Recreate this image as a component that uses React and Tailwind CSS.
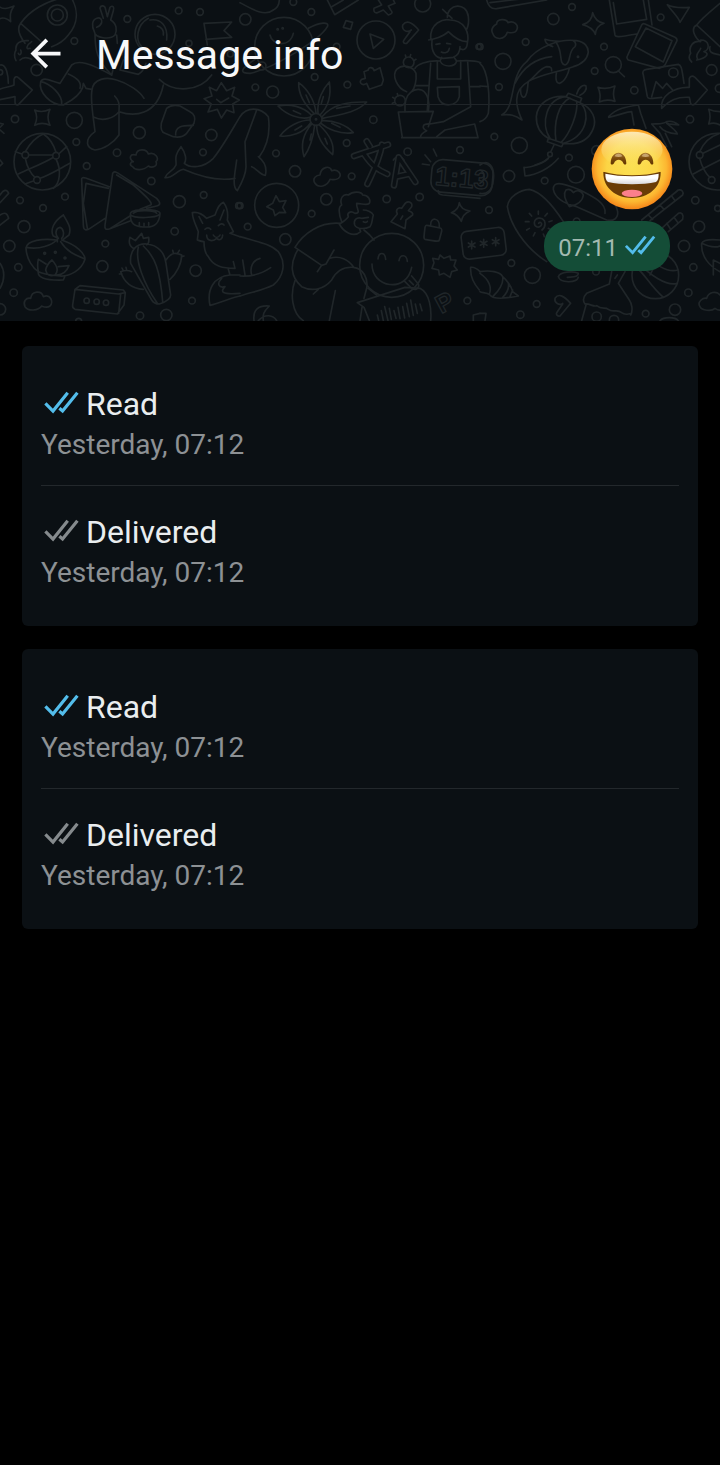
import { MdArrowBack } from 'react-icons/md';

const receipts = [
  [
    { status: 'read', label: 'Read', time: 'Yesterday, 07:12' },
    { status: 'delivered', label: 'Delivered', time: 'Yesterday, 07:12' },
  ],
  [
    { status: 'read', label: 'Read', time: 'Yesterday, 07:12' },
    { status: 'delivered', label: 'Delivered', time: 'Yesterday, 07:12' },
  ],
];

// Wallpaper doodles, drawn at three times their size in six tiles of 720x480.
const tiles = [
  {
    x: 0,
    y: 0,
    circles: [[172, 45, 30], [172, 45, 18], [382, 57, 10], [536, 32, 10], [600, 36, 10], [223, 123, 10], [110, 210, 17], [0, 217, 8], [45, 357, 11], [223, 361, 24], [229, 426, 10], [418, 398, 18], [351, 458, 11], [634, 405, 17], [609, 457, 10], [567, 130, 9], [691, 162, 9], [465, 103, 60], [127, 485, 85], [76, 465, 10], [168, 467, 10], [111, 540, 10]],
    paths: [
      // globe
      'M46 455L66 462M86 465H158M76 455C90 430 110 410 130 402M168 457C160 430 150 415 130 402M176 462L200 440M76 475C80 500 95 525 105 532M168 477C185 510 180 550 160 565M120 535C150 525 190 500 210 490M55 522C90 505 130 490 158 473M100 543L75 552',
      // rocket
      'M62 70C90 30 140 5 180 -5M215 -5C235 30 235 70 205 105C190 125 170 135 155 140M62 70L135 135M62 70C50 85 60 110 75 130M85 122C60 120 45 130 48 150C42 160 42 170 48 182M95 125C80 135 75 150 90 145M60 180C70 170 80 170 95 178M62 150C66 160 60 170 55 160',
      'M-5 18C10 30 22 26 42 18C30 35 30 45 32 65C20 55 10 50 -5 58',
      // astronaut
      'M283 95C275 80 275 60 290 55C300 50 308 60 305 68C302 76 296 80 290 82M310 55L300 25C302 14 314 16 316 25L322 50L330 22C338 14 344 22 340 32L332 60C350 70 352 90 345 105M283 95C285 115 330 120 345 105M285 100C285 150 290 180 335 225L340 205M350 105L352 130',
      'M445 55C410 75 405 120 425 140M450 60C480 55 505 75 500 120M472 78C485 82 492 92 490 105M365 165L375 140M370 180L360 210L415 223C430 215 435 200 438 190',
      'M180 250L215 195C235 178 270 190 335 225M122 245C130 230 145 240 180 250M122 245C115 275 150 315 190 315L215 300C245 280 250 265 250 250L258 265L275 268M205 222C235 235 245 250 240 265M122 245C150 250 190 285 185 315',
      'M276 270C280 235 320 230 350 240C385 250 420 275 432 295M276 270C270 300 280 350 285 395C250 420 260 445 285 450C310 448 340 430 357 405V335C360 310 355 300 344 288M282 352C310 365 340 355 357 335C400 350 470 350 490 255M478 238C520 280 600 275 635 225',
      'M622 135L612 70L695 66L672 92L695 112L618 118',
      'M-5 270C10 260 30 262 42 255V238C44 230 50 228 55 233L97 270L55 314C48 316 45 312 45 306V290L-5 300M0 195C20 190 25 230 25 250',
      'M104 330Q126 340 150 328Q138 350 150 376Q126 364 104 376Q116 352 104 330Z',
      'M612 296L636 288L628 262L650 272L664 248L680 272L704 262L696 288L718 300L698 312L702 338L680 330L664 354L652 328L624 336L634 312ZM650 298L662 308L686 294',
      'M500 325Q515 312 540 318L570 335Q590 345 582 370L560 400Q545 415 520 410L495 400Q480 395 484 370ZM527 405C525 380 545 375 580 376',
      // whale
      'M543 440C520 470 530 480 528 495C520 515 500 515 495 533C520 535 530 510 550 508C600 530 650 545 705 535M543 440C558 460 560 480 553 490C570 505 610 505 640 475C665 445 690 400 720 350C740 320 780 320 805 350C812 400 800 440 778 470M770 330L735 425L738 500M775 470C800 490 800 510 796 526C780 525 770 505 755 500M710 480C705 520 695 560 712 572C730 540 738 520 738 500',
      'M400 485C385 475 390 460 408 465C410 445 440 445 445 462C465 455 480 475 468 485C475 500 455 505 445 498C430 512 405 512 398 500C386 495 392 485 400 485Z',
      'M0 370L10 372L0 382M0 390L12 400',
    ],
  },
  {
    x: 720,
    y: 0,
    circles: [[160, 6, 10], [16, 58, 17], [214, 36, 10], [548, 12, 24], [408, 120, 57], [224, 231, 10], [322, 254, 10], [46, 262, 10], [98, 276, 18], [228, 358, 18], [228, 358, 2], [400, 359, 11], [320, 429, 10], [108, 460, 10], [503, 455, 11], [660, 450, 10], [716, 140, 8], [132, 140, 88], [113, 88, 2], [128, 85, 2], [66, 198, 12], [290, 140, 10], [506, 187, 16], [480, 302, 16]],
    paths: [
      'M90 105C95 135 150 145 160 100M205 85C240 65 270 65 262 80C240 120 100 205 30 220C0 220 -5 210 50 175',
      'M390 102L431 118L400 145Z',
      'M0 8C40 30 75 50 100 30C120 20 118 0 118 -5M262 0L284 44L355 0M275 20L310 0',
      'M318 62L338 67L332 88L310 82Z',
      'M412 -5L425 15L402 25C400 35 405 40 412 38L430 30L445 45C455 42 460 38 452 30L445 18L465 10L460 0',
      'M488 75C500 60 515 65 536 90L500 130C490 132 488 125 492 120L510 95M488 75C485 90 500 100 514 90',
      'M372 215L385 210C385 200 400 200 402 212L420 203L430 240L425 255L388 268L380 250C365 260 355 245 365 238L376 235Z',
      // gardener
      'M608 28L636 55M622 52C622 10 680 5 685 50C687 65 684 80 680 88M572 118C568 70 610 55 630 60C670 60 690 95 682 130C680 150 668 152 660 145M566 120C580 118 610 110 625 95C640 110 660 125 680 125M576 120C572 160 590 175 610 175L640 172C655 165 660 150 660 140M588 133L600 131M620 130L632 132M604 156C612 160 625 160 628 145',
      'M605 172L600 183C610 203 645 203 650 183L642 172M600 183C560 180 530 195 525 205M650 183C690 180 715 185 722 188M592 185V237H662V182M592 262L658 260V290C650 320 605 325 594 290ZM572 190L562 330M683 186L692 320L610 365L570 372C545 370 545 385 560 392C545 400 540 405 542 412M528 257H565M690 260H720M485 413H714L704 372L615 390L590 410M475 336L580 334L565 380M475 336L487 413',
      'M495 335C490 270 530 265 545 270C565 280 570 310 565 334M500 275C470 265 455 225 470 208C490 190 520 200 528 220C530 240 525 265 515 275M498 172L496 165M510 171L512 164M521 182L528 178M465 296L458 292M464 307L457 310M474 288L472 281',
      // flower
      'M222 340C190 310 175 280 176 248C200 265 225 300 228 340M234 340C230 300 250 265 268 246C275 290 265 320 240 345M246 350C280 310 330 305 380 306C350 340 290 345 248 355M246 362C280 360 320 375 340 398C300 405 260 385 243 370M238 375C265 400 285 430 278 464C250 440 230 410 230 376M224 376C220 410 210 445 192 470C180 430 195 395 215 372M212 368C190 400 150 412 120 408C140 380 180 360 210 360M210 352C180 360 140 345 114 318C150 310 190 320 214 345M198 285L208 308M250 290L244 310M290 325L330 318M275 370L300 382M255 415L262 432M210 420L214 402M165 390L185 378M160 332L182 342',
      'M547 492L568 495M555 465L572 485M580 447L590 468M460 480C470 465 485 470 492 480',
    ],
  },
  {
    x: 1440,
    y: 0,
    circles: [[276, 21, 10], [220, 57, 17], [137, 126, 10], [69, 184, 24], [57, 261, 10], [0, 140, 9], [542, 52, 10], [372, 140, 10], [400, 194, 24], [344, 213, 10], [463, 271, 11], [695, 210, 16], [580, 218, 14], [630, 358, 11], [43, 410, 10], [118, 436, 24], [267, 473, 10], [210, 463, 7], [718, 265, 12], [294, 170, 2], [712, 485, 85], [659, 465, 10], [695, 540, 10], [350, 452, 15]],
    paths: [
      'M415 213L433 230M20 0C25 20 35 28 50 26L200 0M30 8L130 -4',
      'M38 100C30 85 45 75 50 72C50 55 80 55 84 68C100 60 118 75 110 90C105 102 90 98 82 97C75 120 45 122 38 100Z',
      'M338 38Q346 65 372 70Q348 78 346 103Q338 82 308 74Q336 66 338 38Z',
      'M354 262Q380 270 405 258Q396 282 405 304Q380 296 358 306Q364 284 354 262Z',
      // photos
      'M388 0L405 105C407 112 412 112 470 102M505 0L516 75M400 8L410 72L500 58L490 0M495 72L585 112C592 116 592 120 590 124L555 195C550 202 545 200 538 205L445 180C440 176 440 172 442 168L485 75C488 70 490 70 495 72ZM498 84L576 122L550 186L466 140Z',
      'M490 225C486 215 490 210 500 208L595 193C603 195 605 200 612 250M490 225L502 290C504 298 510 296 545 292M515 290L528 245L548 265L560 250L578 270M545 325C540 290 580 260 628 262V235C632 225 640 228 645 232L682 270L645 312C635 318 630 312 630 300L628 292C590 290 570 300 545 325Z',
      'M562 14C580 24 600 24 628 22L600 67C595 50 580 40 562 14Z',
      'M720 10C690 35 665 55 650 75L720 140M650 75C630 85 645 115 662 125C640 120 625 140 632 160C625 170 628 180 635 186M662 120C690 120 690 150 672 155C690 160 680 175 650 180M690 140C685 160 700 160 720 165M652 175C645 160 660 155 662 145',
      // koi
      'M65 345C110 320 85 230 140 185C170 140 240 115 290 122C340 130 335 185 280 200C210 225 110 230 110 300C110 330 120 345 126 360C105 345 90 342 65 345ZM195 118C215 125 225 122 240 124M195 118C195 135 210 135 218 140M230 130C250 160 235 190 255 195C275 190 262 155 285 140C290 130 285 125 280 122M105 250C130 200 170 175 215 170M230 215C225 240 230 250 238 250C255 245 265 220 268 205M122 265C120 290 130 295 135 290C145 275 142 255 145 245C170 225 180 205 200 200C215 200 215 205 215 212',
      // lantern
      'M169 350C172 310 210 285 258 290L300 308C340 325 350 360 340 385C325 425 290 435 250 430L205 415C180 400 168 380 169 350ZM258 290C200 295 180 370 210 415M300 308C335 340 320 410 250 430M270 294C235 310 220 370 228 422M290 303C295 340 270 400 243 428M258 290L300 308L305 295L265 280ZM290 282C295 262 310 252 318 258C322 268 312 280 300 286M205 415L250 430L245 440L202 425ZM222 435L212 456M208 470C200 485 180 490 165 495',
      'M386 350C410 325 440 320 475 315L482 340L498 385M386 352C420 345 440 335 455 335L462 375M515 372C530 370 545 375 560 365C580 360 590 370 596 375C580 372 570 375 560 370C580 385 590 395 592 402C570 400 550 395 540 380M515 372L540 400L560 440M556 400L575 440',
      'M720 335Q700 335 686 328Q694 350 686 372Q705 366 720 375M0 190C25 210 30 290 25 340C20 355 10 362 0 365M0 258L25 260',
      'M669 460L720 435M659 455C670 430 690 410 715 402M659 475C665 500 680 525 690 532M640 522C670 505 700 490 720 480',
    ],
  },
  {
    x: 0,
    y: 480,
    circles: [[260, 18, 10], [454, 63, 11], [60, 121, 10], [195, 110, 10], [129, 144, 10], [72, 200, 18], [28, 258, 17], [316, 251, 10], [524, 214, 11], [538, 125, 18], [611, 105, 10], [307, 319, 17], [587, 332, 17], [55, 322, 11], [41, 398, 11], [420, 467, 11], [499, 465, 17], [576, 422, 10], [0, 448, 17], [716, 137, 9], [260, 422, 8], [290, 425, 8], [318, 428, 8], [134, 280, 3], [166, 277, 3], [195, 294, 3], [236, 484, 9]],
    paths: [
      // samosas and bowl
      'M328 80L257 54C250 52 243 52 245 60L250 195C250 212 260 212 270 205L315 175M325 85L258 70L250 130L262 205M440 145L470 138C482 135 482 128 470 115L355 40C348 36 342 32 338 40L315 195C313 208 318 210 330 206L392 182M390 168L330 206M350 45L400 75C440 110 460 130 452 135L420 148',
      'M391 162C391 145 480 145 480 160C480 175 391 178 391 162L392 175C395 195 410 201 440 201C465 201 478 190 480 160M400 160C410 148 465 150 470 160M418 188V196M432 190V198M446 188V196',
      // oil lamp
      'M190 165C160 185 150 210 160 228L175 235M190 165C205 190 215 205 207 225L190 238M175 235C165 225 165 205 180 202C190 205 195 225 185 235M172 235V245M78 265C80 240 130 235 170 240M182 245C200 275 225 285 253 296M78 265C80 300 100 325 115 335M185 240C230 255 255 280 255 298C245 330 210 350 180 348C150 345 130 342 115 335C112 350 130 362 190 360L195 348M78 262C120 270 155 255 170 240M115 335C112 320 112 310 115 298L138 312M137 330C140 315 150 305 156 300C165 310 180 330 165 345C150 350 140 345 137 330ZM175 320L207 317C200 335 190 345 170 345',
      // cactus
      'M392 310C388 270 410 250 440 252C475 255 495 280 498 310L512 405C512 415 500 425 478 432C465 432 458 425 455 420ZM415 262C405 300 430 370 472 430M430 258C465 290 480 330 488 425M400 265C388 258 386 245 390 232L406 242L425 220L430 235L446 232C448 245 445 252 440 254M498 300C515 275 530 278 545 285C545 310 530 340 510 358M430 388C390 385 370 360 362 335C375 330 385 330 395 335M520 278L518 271M534 278L538 271M545 290L552 288M366 342L358 342M370 332L366 324M380 330L378 322',
      'M225 388L240 377L370 390L376 398L372 435L352 462L225 448C218 445 217 440 218 435ZM225 388L355 402L376 398M362 402L356 460',
      'M75 440C68 425 78 412 92 415C95 392 125 390 130 410C150 400 162 425 150 438C140 445 130 440 125 438C115 452 85 455 75 440Z',
      'M0 105C10 90 20 85 26 100L0 128M0 165C15 155 22 160 26 175L0 195M0 310C15 330 15 360 0 385M0 0L8 10L0 18',
      // fox
      'M577 158C590 155 605 160 620 175L645 165C650 150 660 130 670 127C680 140 685 160 682 180L700 215L690 220L720 230M577 158C578 180 590 200 595 215L592 240C600 243 605 245 612 245M597 170L608 190M660 180L672 150M612 245C612 270 620 285 625 290C640 320 670 325 705 325M615 208C620 202 628 202 632 208M655 197C660 190 668 190 672 195M640 225C645 235 655 235 660 225M620 225C620 245 640 245 650 235C660 245 668 235 668 225M630 436C620 390 640 350 690 345H720M630 436C660 430 700 410 720 408M665 355C650 370 655 385 675 380C660 395 665 405 720 400M685 328L690 345M700 305L705 325',
    ],
  },
  {
    x: 720,
    y: 480,
    circles: [[165, 34, 17], [335, 49, 10], [110, 136, 66], [259, 118, 17], [440, 117, 11], [539, 111, 11], [215, 161, 10], [0, 137, 9], [23, 200, 10], [136, 238, 17], [455, 316, 96], [682, 422, 10]],
    paths: [
      'M108 107L118 125L138 122L128 142L137 158L118 157L105 167L100 150L80 140L98 130Z',
      'M225 70C215 55 230 45 240 45C243 20 270 15 275 32C295 25 308 45 295 55C285 62 275 58 270 58C262 80 235 85 225 70Z',
      // man
      'M305 185C295 160 295 140 305 135C298 115 310 100 325 105C340 92 365 95 368 105C385 105 393 120 388 130C380 138 365 130 350 130C348 145 365 160 345 160C330 150 320 160 325 170C318 180 310 185 298 192C310 215 340 235 362 215L358 205M370 150C380 150 395 155 400 165C395 180 398 190 390 200C375 208 350 208 344 195C340 180 350 170 365 175L385 172M370 185C375 188 380 188 382 184',
      'M165 262C190 220 240 185 300 190M165 262L245 316L258 312L282 270M372 210C385 220 395 230 402 240M172 272C150 310 150 350 185 380C215 395 250 390 275 360C290 330 310 320 340 322C370 325 385 355 380 385L372 415M270 295C300 285 325 300 340 320M165 362C150 400 155 460 190 482M220 402L235 388M286 392L268 482M245 316L232 335M385 385L410 405',
      // smiley
      'M414 297C416 275 435 275 437 298M477 302C480 282 500 282 502 304M396 312C395 385 500 400 515 322M492 362L512 382C525 395 540 385 535 372L515 348M508 362L520 374',
      'M352 428L495 382L540 385C570 400 575 450 572 482M352 428L372 442L388 482M366 442L360 482M412 465L416 482M424 452L430 482M434 440L444 482M448 445L454 478M462 452L468 475M474 442L480 476M488 440L494 474M500 430L508 470M512 420L520 466M526 432L532 460M540 432L546 452',
      'M453 185L472 162C465 150 475 140 485 145L492 135C500 120 520 125 515 140L505 152C515 155 520 160 518 165L498 180L495 206ZM488 168L482 178',
      'M562 196L600 204C606 206 606 208 605 214L598 240C597 245 592 245 555 238C550 236 552 230 555 202C556 197 558 195 562 196ZM572 195C570 170 600 172 598 200',
      'M658 128Q662 150 690 153Q668 162 664 184Q654 164 634 158Q656 150 658 128Z',
      'M600 285L612 295L630 288L632 300L648 300L642 318L652 330L635 335L630 352L612 340L598 345L596 330L576 325L582 308L578 295L596 298Z',
      'M0 230C50 245 90 250 115 275C140 310 130 350 100 375C70 390 40 395 0 408M0 348C30 350 60 345 92 323M35 345C28 320 40 300 60 295M8 300L15 345',
      'M42 482C38 450 55 435 88 438C70 455 68 465 70 482M55 482C75 460 100 465 110 482M692 322C690 350 700 370 718 390M692 322C705 320 715 330 720 335M700 482V465L720 460',
      'M595 92V96C595 103 600 104 608 105L720 115',
    ],
  },
  {
    x: 1440,
    y: 480,
    circles: [[87, 48, 17], [194, 62, 10], [288, 44, 25], [27, 150, 10], [646, 121, 11], [657, 200, 17], [612, 258, 17], [640, 322, 11], [94, 309, 10], [157, 346, 24], [170, 432, 10], [121, 464, 11], [348, 335, 10], [497, 461, 10], [585, 449, 17], [625, 398, 11], [350, 470, 14], [402, 480, 14], [290, 184, 10], [713, 145, 9], [526, 346, 70]],
    paths: [
      'M82 140C85 110 120 90 148 88C180 95 215 130 250 185M82 140C90 190 130 260 200 305M176 190C180 183 188 190 183 197C175 206 163 200 163 188C165 172 185 170 193 182C198 195 192 205 186 210M175 163V153M195 168L202 160M207 185L216 182M205 205L214 210M190 222L193 230M165 218L160 228M148 205L140 210M147 185H136M155 168L148 160',
      // bandage
      'M220 88C220 65 240 65 300 90C340 110 380 130 375 160M220 88C225 115 250 130 290 140L380 180C400 185 415 175 413 155C410 135 395 120 375 110M268 140C255 120 250 100 258 90C268 85 275 90 280 98C290 88 305 92 310 105C308 125 290 135 268 140Z',
      'M485 180L595 90C605 88 612 95 608 105L510 182M505 165L518 178M540 135L552 148M575 108L585 122M545 205L595 160C605 155 612 165 608 178L565 215M560 190L572 208M582 172L594 188',
      'M132 22C150 25 190 10 205 -5M132 22L135 48C170 45 210 25 235 -5M0 15C25 -5 45 20 40 60C38 90 20 105 0 100M0 30C15 35 18 60 0 70',
      'M665 250C670 238 700 238 720 240M665 250C662 290 690 320 720 335M665 250C690 262 710 262 720 258M700 345V300L720 310',
      'M720 405C710 392 685 395 680 415C670 412 650 425 660 440C665 452 695 455 705 445C715 452 720 450 720 450',
      'M458 330C480 310 500 370 550 412M470 304C510 345 560 380 592 370M500 285C520 310 560 340 594 330M540 280C530 310 520 325 510 345',
      'M0 335C30 330 60 335 68 350C80 360 95 380 98 395L115 408C80 415 40 420 30 405C20 395 5 400 0 395M68 350C72 370 55 395 40 408M85 370C88 385 78 402 68 412M98 390L90 410M0 340C30 360 35 385 28 402',
      'M235 350C240 335 280 332 295 340C295 355 270 350 262 352M235 350C240 370 290 370 295 352',
      'M225 415C235 400 250 405 272 430L240 468C230 470 228 462 230 458L248 432M225 415C222 428 238 438 248 430',
      'M395 335L388 372L320 400C305 415 310 425 315 432C330 430 340 442 350 437C365 450 375 440 385 448C400 460 410 445 425 458C440 470 450 455 452 465C460 450 455 430 448 420L415 370L435 335M318 435L305 482M405 355L412 345M0 460H18L15 482M540 482C550 470 585 470 595 482',
    ],
  },
];

const Wallpaper = () => (
  <svg
    aria-hidden="true"
    viewBox="0 0 2160 963"
    preserveAspectRatio="xMidYMin slice"
    className="absolute inset-0 h-full w-full text-[#202629]"
    fill="none"
    stroke="currentColor"
    strokeWidth="5"
    strokeLinecap="round"
    strokeLinejoin="round"
  >
    {tiles.map((tile) => (
      <g key={`${tile.x}-${tile.y}`} transform={`translate(${tile.x} ${tile.y})`}>
        {tile.circles.map(([cx, cy, r], i) => (
          <circle key={i} cx={cx} cy={cy} r={r} />
        ))}
        {tile.paths.map((d, i) => (
          <path key={i} d={d} />
        ))}
      </g>
    ))}
    {/* translate sign */}
    <path d="M1100 424l10 16M1062 468l102-34M1146 434c-8 48-30 88-44 118M1092 462c24 36 42 48 70 60M1182 556l14-84 50 74M1190 530l36-8" strokeWidth="20" />
    <path d="M1100 424l10 16M1062 468l102-34M1146 434c-8 48-30 88-44 118M1092 462c24 36 42 48 70 60M1182 556l14-84 50 74M1190 530l36-8" strokeWidth="10" stroke="#0b1014" />
    {/* clock and keypad */}
    <rect x="1294" y="484" width="184" height="98" rx="32" transform="rotate(5 1386 533)" />
    <g className="font-['Liberation_Sans',sans-serif] font-bold">
      <text x="1386" y="561" fontSize="80" textAnchor="middle" strokeWidth="4" transform="rotate(5 1386 533)">1:13</text>
      <text x="1324" y="942" fontSize="76" strokeWidth="4" transform="rotate(-28 1324 942)">P</text>
    </g>
    <rect x="1386" y="688" width="130" height="84" rx="18" transform="rotate(-7 1450 730)" />
    <path d="M1415 723v24M1405 729l20 12M1405 741l20-12M1451 718v24M1441 724l20 12M1441 736l20-12M1487 713v24M1477 719l20 12M1477 731l20-12" />
  </svg>
);

const DoubleCheck = ({ className }) => (
  <svg
    aria-hidden="true"
    viewBox="0 0 43 26"
    className={className}
    fill="none"
    stroke="currentColor"
    strokeWidth="3.2"
  >
    <path d="M4.4 12.3L12 20L26.7 1.8M18.4 17.2L21.6 20L36.4 1.8" />
  </svg>
);

const GrinningEmoji = () => (
  <svg role="img" aria-label="Grinning face with smiling eyes" viewBox="33 26 246 246" className="mr-[47px] size-[82px]">
    <defs>
      <radialGradient id="face" cx="0.5" cy="0.48" r="0.52">
        <stop offset="0" stopColor="#fbe052" />
        <stop offset="0.6" stopColor="#fcd545" />
        <stop offset="0.82" stopColor="#fcb731" />
        <stop offset="1" stopColor="#f58519" />
      </radialGradient>
      <linearGradient id="shine" x1="0" y1="0" x2="0" y2="1">
        <stop offset="0" stopColor="#fdf3cf" stopOpacity="0.85" />
        <stop offset="1" stopColor="#fbe468" stopOpacity="0" />
      </linearGradient>
      <linearGradient id="teeth" x1="0" y1="0" x2="0" y2="1">
        <stop offset="0.4" stopColor="#ffffff" />
        <stop offset="1" stopColor="#d8d8dc" />
      </linearGradient>
      <linearGradient id="eye" x1="0" y1="0" x2="0" y2="1">
        <stop offset="0" stopColor="#a5762c" />
        <stop offset="0.5" stopColor="#7a4a0c" />
        <stop offset="1" stopColor="#603400" />
      </linearGradient>
      <clipPath id="mouth">
        <path d="M70 157C120 171 192 171 242 157C244 205 205 236 156 236C107 236 68 205 70 157Z" />
      </clipPath>
    </defs>
    <circle cx="156" cy="149" r="121" fill="url(#face)" />
    <ellipse cx="156" cy="91" rx="92" ry="54" fill="url(#shine)" />
    <path d="M92 132C93 90 138 90 139 132C139 137 132 137 130 132C126 118 106 118 102 132C99 137 92 137 92 132Z" fill="url(#eye)" />
    <path d="M173 132C174 90 219 90 220 132C220 137 213 137 211 132C207 118 187 118 183 132C180 137 173 137 173 132Z" fill="url(#eye)" />
    <path d="M104 111C109 100 121 100 127 111C121 114 111 114 104 111ZM185 111C190 100 202 100 208 111C202 114 192 114 185 111Z" fill="#c6a36d" />
    <g clipPath="url(#mouth)">
      <rect x="66" y="150" width="180" height="90" fill="#6a3c06" />
      <path d="M76 163C120 173 192 173 236 163C236 176 234 184 228 188C190 197 122 197 84 188C78 184 76 176 76 163Z" fill="url(#teeth)" />
      <ellipse cx="156" cy="222" rx="31" ry="11" fill="#fb7f8b" />
    </g>
  </svg>
);

const Header = () => (
  <header className="relative flex h-[105px] items-center gap-7 border-b border-[#202529] pt-[3px] pl-[23px]">
    <button type="button" aria-label="Back" className="text-[#f7f8fa]">
      <MdArrowBack className="size-[45px]" />
    </button>
    <h1 className="pt-[2px] text-[41px] leading-12 text-[#f7f8fa]">Message info</h1>
  </header>
);

const MessagePreview = () => (
  <div className="relative flex flex-col items-end gap-[11px] pt-[23px] pb-[50px]">
    <GrinningEmoji />
    <div className="mr-[50px] flex h-[50px] items-center gap-1 rounded-[24px] bg-[#144d37] pr-[10px] pl-[14px]">
      <span className="pt-1 text-2xl leading-7 text-[#a3bab1]">07:11</span>
      <DoubleCheck className="h-[23px] w-[38px] text-[#53bdeb]" />
    </div>
  </div>
);

const ReceiptItem = ({ status, label, time }) => (
  <li className="border-t border-[#23282c] pt-[26px] pb-[19px] first:border-t-0">
    <div className="flex items-center gap-[2px]">
      <DoubleCheck
        className={`h-[26px] w-[43px] ${status === 'read' ? 'text-[#53bdeb]' : 'text-[#858a8d]'}`}
      />
      <span className="text-[32px] leading-10 text-[#e9edef]">{label}</span>
    </div>
    <p className="text-[28px] leading-[42px] text-[#8d9194]">{time}</p>
  </li>
);

const ReceiptCard = ({ items }) => (
  <ul className="rounded-md bg-[#0b1014] px-[19px] pt-3 pb-[13px]">
    {items.map((item) => (
      <ReceiptItem key={item.status} {...item} />
    ))}
  </ul>
);

const App = () => {
  return (
    <div className="min-h-screen bg-black font-[Roboto,sans-serif]">
      <div className="relative overflow-hidden bg-[#0b1014]">
        <Wallpaper />
        <Header />
        <MessagePreview />
      </div>
      <main className="flex flex-col gap-[23px] px-[22px] py-[25px]">
        {receipts.map((items, i) => (
          <ReceiptCard key={i} items={items} />
        ))}
      </main>
    </div>
  );
};

export default App;
